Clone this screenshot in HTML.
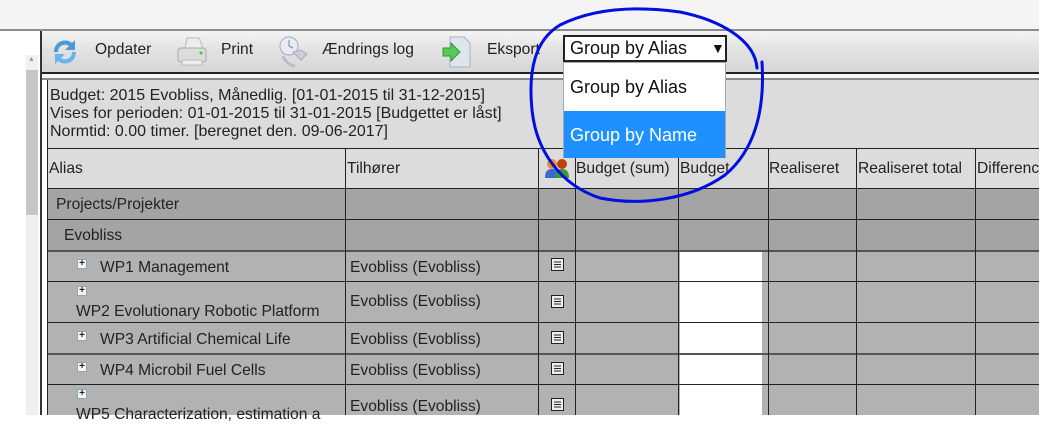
<!DOCTYPE html>
<html><head><meta charset="utf-8"><style>
*{margin:0;padding:0;box-sizing:border-box}
body{width:1039px;height:415px;overflow:hidden;background:#fff;font-family:"Liberation Sans","DejaVu Sans",sans-serif;font-size:15px;color:#222;position:relative}
.a{position:absolute}
.t{position:absolute;white-space:nowrap}
.hl{position:absolute;height:1px;background:#222}
.vl{position:absolute;width:1px;background:#222}
.r{font-size:15.6px}
.p{position:absolute;width:10px;height:10px;background:#f4f4f4;border:1px solid #8aa;font-size:10px;line-height:8px;text-align:center;font-weight:bold;color:#222}
</style></head><body>
<div class="a" style="left:0;top:0;width:1039px;height:29px;background:#f4f4f4"></div>
<div class="a" style="left:0;top:29px;width:1039px;height:2px;background:#8c8c8c"></div>
<div class="a" style="left:26px;top:55px;width:12px;height:360px;background:#f0f0f0"></div>
<div class="a" style="left:26px;top:70px;width:12px;height:145px;background:#c6c6c6"></div>
<div class="t" style="left:28px;top:56px;font-size:7px;color:#999">▲</div>
<div class="a" style="left:40px;top:31px;width:2px;height:384px;background:#333"></div>
<div class="a" style="left:42px;top:31px;width:997px;height:42px;background:linear-gradient(#f4f4f4,#e2e2e2 45%,#d6d6d6)"></div>
<div class="a" style="left:42px;top:72px;width:997px;height:2px;background:#222"></div>
<div class="a" style="left:42px;top:74px;width:997px;height:4px;background:#f8f8f8"></div>
<div class="a" style="left:42px;top:78px;width:997px;height:2px;background:#888"></div>
<svg class="a" style="left:48px;top:34px" width="34" height="36" viewBox="0 0 34 36"><path d="M6 18a11 11 0 0 1 18-9l3-3v10h-10l4-4a7 7 0 0 0-11 6z" fill="#4a9ad8"/><path d="M28 18a11 11 0 0 1-18 9l-3 3V20h10l-4 4a7 7 0 0 0 11-6z" fill="#6ab4ea"/></svg>
<div class="t r" style="left:95px;top:41px">Opdater</div>
<svg class="a" style="left:175px;top:36px" width="34" height="32"><path d="M12 2h12l4 10H10z" fill="#e8eef2" stroke="#bbb"/><rect x="3" y="12" width="28" height="14" rx="3" fill="#dcdcdc" stroke="#aaa"/><circle cx="26" cy="17" r="1.5" fill="#3c3"/><rect x="7" y="24" width="20" height="5" fill="#eee" stroke="#bbb"/></svg>
<div class="t r" style="left:221px;top:41px">Print</div>
<svg class="a" style="left:275px;top:34px" width="36" height="36"><circle cx="14" cy="12" r="9" fill="#e6ecf0" stroke="#aab"/><path d="M14 6v6l4 2" stroke="#789" fill="none"/><path d="M18 18l8 8 6-6-6-4z" fill="#ccd" stroke="#aab"/><path d="M8 22c2 6 8 10 12 10" stroke="#bbc" stroke-width="3" fill="none"/></svg>
<div class="t r" style="left:322px;top:41px">Ændrings log</div>
<svg class="a" style="left:440px;top:34px" width="34" height="36"><path d="M10 3h14l6 6v24H10z" fill="#dde6ee" stroke="#a8b4c0"/><path d="M3 14h8v-5l9 9-9 9v-5H3z" fill="#5c5" stroke="#393"/></svg>
<div class="t r" style="left:487px;top:41px">Eksport</div>
<div class="a" style="left:47px;top:80px;width:992px;height:335px;background:#dcdcdc;border-left:1px solid #222"></div>
<div class="t" style="left:50px;top:87px;font-size:16px;line-height:18px">Budget: 2015 Evobliss, Månedlig. [01-01-2015 til 31-12-2015]<br>Vises for perioden: 01-01-2015 til 31-01-2015 [Budgettet er låst]<br>Normtid: 0.00 timer. [beregnet den. 09-06-2017]</div>
<div class="a" style="left:48px;top:148px;width:991px;height:40px;background:#dcdcdc"></div>
<div class="a" style="left:48px;top:188px;width:991px;height:62px;background:#a4a4a4"></div>
<div class="a" style="left:48px;top:250px;width:991px;height:165px;background:#b2b2b2"></div>
<div class="hl" style="left:48px;top:148px;width:991px"></div>
<div class="hl" style="left:48px;top:188px;width:991px"></div>
<div class="hl" style="left:48px;top:219px;width:991px"></div>
<div class="hl" style="left:48px;top:250px;width:991px;height:2px;background:#555"></div>
<div class="hl" style="left:48px;top:281px;width:991px"></div>
<div class="hl" style="left:48px;top:322px;width:991px"></div>
<div class="hl" style="left:48px;top:353px;width:991px;height:2px;background:#555"></div>
<div class="hl" style="left:48px;top:384px;width:991px"></div>
<div class="vl" style="left:345px;top:148px;height:267px"></div>
<div class="vl" style="left:538px;top:148px;height:267px"></div>
<div class="vl" style="left:575px;top:148px;height:267px"></div>
<div class="vl" style="left:678px;top:148px;height:267px"></div>
<div class="vl" style="left:768px;top:148px;height:267px"></div>
<div class="vl" style="left:856px;top:148px;height:267px"></div>
<div class="vl" style="left:975px;top:148px;height:267px"></div>
<div class="a" style="left:680px;top:252px;width:82px;height:29px;background:#fff"></div>
<div class="a" style="left:680px;top:282px;width:82px;height:40px;background:#fff"></div>
<div class="a" style="left:680px;top:323px;width:82px;height:30px;background:#fff"></div>
<div class="a" style="left:680px;top:355px;width:82px;height:29px;background:#fff"></div>
<div class="a" style="left:680px;top:385px;width:82px;height:30px;background:#fff"></div>
<div class="t r" style="left:49px;top:160px">Alias</div>
<div class="t r" style="left:347px;top:160px">Tilhører</div>
<svg class="a" style="left:544px;top:158px" width="28" height="22"><circle cx="8" cy="6" r="5" fill="#f09020"/><path d="M1 20c0-7 3-9 7-9s7 2 7 9z" fill="#3a6ad0"/><circle cx="18" cy="6" r="5" fill="#c04010"/><path d="M11 20c0-7 3-9 7-9s7 2 7 9z" fill="#3a9a30"/></svg>
<div class="t r" style="left:576px;top:160px">Budget (sum)</div>
<div class="t r" style="left:680px;top:160px">Budget</div>
<div class="t r" style="left:769px;top:160px">Realiseret</div>
<div class="t r" style="left:858px;top:160px">Realiseret total</div>
<div class="t r" style="left:977px;top:160px">Differenc</div>
<div class="t r" style="left:56px;top:196px">Projects/Projekter</div>
<div class="t r" style="left:64px;top:227px">Evobliss</div>
<div class="t r" style="left:100px;top:259px">WP1 Management</div>
<div class="t r" style="left:76px;top:303px">WP2 Evolutionary Robotic Platform</div>
<div class="t r" style="left:100px;top:331px">WP3 Artificial Chemical Life</div>
<div class="t r" style="left:100px;top:362px">WP4 Microbil Fuel Cells</div>
<div class="t r" style="left:76px;top:406px">WP5 Characterization, estimation a</div>
<div class="p" style="left:77px;top:259px">+</div>
<div class="p" style="left:77px;top:286px">+</div>
<div class="p" style="left:77px;top:331px">+</div>
<div class="p" style="left:77px;top:362px">+</div>
<div class="p" style="left:77px;top:389px">+</div>
<div class="t r" style="left:350px;top:259px">Evobliss (Evobliss)</div>
<div class="t r" style="left:350px;top:293px">Evobliss (Evobliss)</div>
<div class="t r" style="left:350px;top:331px">Evobliss (Evobliss)</div>
<div class="t r" style="left:350px;top:362px">Evobliss (Evobliss)</div>
<div class="t r" style="left:350px;top:398px">Evobliss (Evobliss)</div>
<svg class="a" style="left:551px;top:258px" width="13" height="13"><rect x=".5" y=".5" width="12" height="12" fill="#eee" stroke="#222"/><path d="M3 4h7M3 6.5h7M3 9h7" stroke="#222"/></svg>
<svg class="a" style="left:551px;top:295px" width="13" height="13"><rect x=".5" y=".5" width="12" height="12" fill="#eee" stroke="#222"/><path d="M3 4h7M3 6.5h7M3 9h7" stroke="#222"/></svg>
<svg class="a" style="left:551px;top:331px" width="13" height="13"><rect x=".5" y=".5" width="12" height="12" fill="#eee" stroke="#222"/><path d="M3 4h7M3 6.5h7M3 9h7" stroke="#222"/></svg>
<svg class="a" style="left:551px;top:362px" width="13" height="13"><rect x=".5" y=".5" width="12" height="12" fill="#eee" stroke="#222"/><path d="M3 4h7M3 6.5h7M3 9h7" stroke="#222"/></svg>
<svg class="a" style="left:551px;top:398px" width="13" height="13"><rect x=".5" y=".5" width="12" height="12" fill="#eee" stroke="#222"/><path d="M3 4h7M3 6.5h7M3 9h7" stroke="#222"/></svg>
<div class="a" style="left:563px;top:35px;width:164px;height:27px;background:#fff;border:2px solid #222"></div>
<div class="t" style="left:570px;top:38px;font-size:18px;color:#111">Group by Alias</div>
<div class="t" style="left:711px;top:40px;font-size:14px;color:#111">▼</div>
<div class="a" style="left:563px;top:62px;width:163px;height:96px;background:#fff;border:1px solid #9ab"></div>
<div class="t" style="left:570px;top:77px;font-size:18px;color:#111">Group by Alias</div>
<div class="a" style="left:564px;top:111px;width:161px;height:47px;background:#1e90ff"></div>
<div class="t" style="left:570px;top:125px;font-size:18px;color:#fff">Group by Name</div>
<svg class="a" style="left:0;top:0" width="1039" height="415"><path d="M757 68C755 40 720 20 680 12C630 5 590 10 560 25C535 40 528 70 532 110C536 150 560 185 600 198C640 206 690 200 725 175C755 150 765 110 762 62" fill="none" stroke="#0010e0" stroke-width="3" stroke-linecap="round"/></svg>
</body></html>
